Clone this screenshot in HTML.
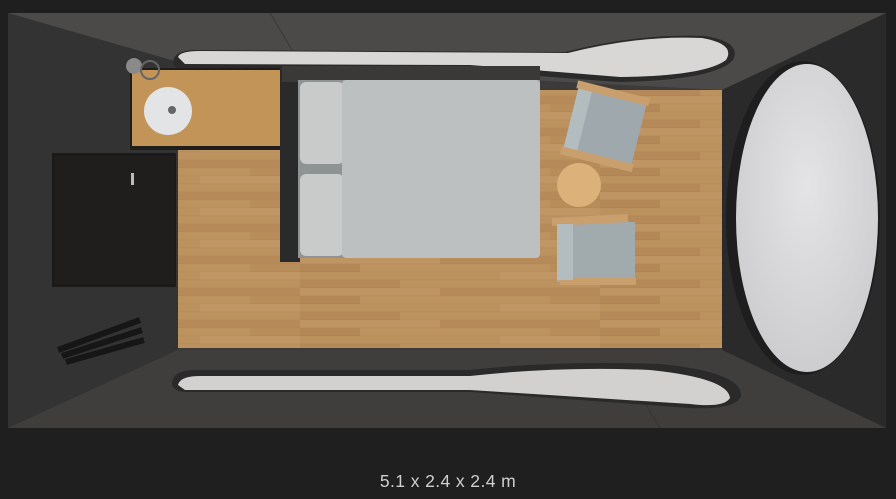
<!DOCTYPE html>
<html><head><meta charset="utf-8"><style>
html,body{margin:0;padding:0;background:#1f1f1f;width:896px;height:499px;overflow:hidden}
svg{position:absolute;left:0;top:0}
.cap{position:absolute;left:0;width:896px;top:471px;text-align:center;color:#cfcfcf;font:17.5px "Liberation Sans",sans-serif;letter-spacing:0.4px}
</style></head><body>
<svg width="896" height="499" viewBox="0 0 896 499">
<defs>
<pattern id="wood" width="300" height="32" patternUnits="userSpaceOnUse">
<rect width="300" height="32" fill="#b98e5c"/>
<rect x="0" y="0" width="140" height="8" fill="#bf9563"/>
<rect x="140" y="0" width="160" height="8" fill="#b68b59"/>
<rect x="0" y="8" width="60" height="8" fill="#b38856"/>
<rect x="60" y="8" width="190" height="8" fill="#bd9360"/>
<rect x="250" y="8" width="50" height="8" fill="#b98d5a"/>
<rect x="0" y="16" width="200" height="8" fill="#bb915e"/>
<rect x="200" y="16" width="100" height="8" fill="#c09764"/>
<rect x="0" y="24" width="100" height="8" fill="#b68a58"/>
<rect x="100" y="24" width="200" height="8" fill="#bc925f"/>
<rect y="7.5" width="300" height="0.7" fill="#8f6a42" opacity=".2"/>
<rect y="15.5" width="300" height="0.7" fill="#8f6a42" opacity=".2"/>
<rect y="23.5" width="300" height="0.7" fill="#8f6a42" opacity=".2"/>
<rect y="31.5" width="300" height="0.7" fill="#8f6a42" opacity=".2"/>
</pattern>
<radialGradient id="mir" cx="50%" cy="40%" r="60%"><stop offset="0" stop-color="#e4e4e6"/><stop offset="1" stop-color="#cdcdd0"/></radialGradient>
</defs>
<rect x="8" y="13" width="878" height="415" fill="#3c3b3a"/>
<polygon points="8,13 886,13 722,90 178,62" fill="#4b4a48"/>
<polygon points="8,13 178,62 178,350 8,428" fill="#333333"/>
<polygon points="886,13 886,428 722,350 722,90" fill="#2b2a2a"/>
<polygon points="8,428 886,428 722,350 178,350" fill="#403e3c"/>
<line x1="270" y1="13" x2="295" y2="55" stroke="#3a3938" stroke-width="1"/>
<line x1="660" y1="428" x2="640" y2="395" stroke="#363534" stroke-width="1"/>
<rect x="178" y="90" width="544" height="258" fill="url(#wood)"/>
<rect x="178" y="62" width="120" height="30" fill="url(#wood)"/>
<path d="M173,62 Q174,50 195,50 L565,52 Q640,33 705,36 Q742,42 733,60 Q715,80 620,82 Q560,78 470,70 L185,70 Q173,69 173,62 Z" fill="#2a2a2a"/>
<path d="M178,57 Q180,51 200,51 L568,53 Q640,35 702,38 Q736,44 726,60 Q705,76 620,77 Q560,72 470,65 L185,64 Z" fill="#d8d7d6"/>
<path d="M172,383 Q173,370 195,370 L470,370 Q560,360 660,364 Q742,372 741,396 Q736,410 690,408 L470,392 L185,392 Q172,391 172,383 Z" fill="#2a2a2a"/>
<path d="M178,385 Q180,376 200,376 L470,376 Q560,366 650,370 Q728,378 730,398 Q724,408 690,404 L470,390 L185,390 Z" fill="#d3d1cf"/>
<ellipse cx="803" cy="218" rx="77" ry="157" fill="#1e1e1e"/>
<ellipse cx="807" cy="218" rx="71" ry="154" fill="url(#mir)"/>
<rect x="52" y="153" width="124" height="134" fill="#1c1a19"/>
<rect x="55" y="156" width="120" height="128" fill="#201e1d"/>
<rect x="131" y="173" width="3" height="12" fill="#bbb"/>
<rect x="130" y="68" width="152" height="82" fill="#1f1e1d"/>
<rect x="132" y="70" width="148" height="76" fill="#c39458"/>
<circle cx="168" cy="111" r="24" fill="#e2e4e6"/>
<circle cx="172" cy="110" r="4" fill="#666"/>
<circle cx="134" cy="66" r="8" fill="#8a8a8a"/>
<circle cx="150" cy="70" r="9" fill="none" stroke="#666" stroke-width="2"/>
<rect x="280" y="66" width="20" height="196" fill="#2b2a2a"/>
<rect x="282" y="66" width="258" height="16" fill="#3a3938"/>
<rect x="298" y="80" width="242" height="178" fill="#8e9394"/>
<rect x="300" y="82" width="44" height="82" rx="6" fill="#c9cbcb"/>
<rect x="300" y="174" width="44" height="82" rx="6" fill="#c9cbcb"/>
<rect x="342" y="80" width="198" height="178" rx="4" fill="#bcc0c0"/>
<g transform="rotate(14 604 126)">
<rect x="570" y="94" width="70" height="64" fill="#9fa9ad"/>
<rect x="568" y="88" width="74" height="8" fill="#c99f6d"/>
<rect x="568" y="156" width="74" height="8" fill="#c99f6d"/>
<rect x="570" y="96" width="14" height="60" fill="#b3bcbf"/>
</g>
<circle cx="579" cy="185" r="22" fill="#dcb27a"/>
<rect x="557" y="222" width="78" height="60" fill="#a1abae"/>
<rect x="552" y="216" width="76" height="8" fill="#c99f6d" transform="rotate(-3 590 220)"/>
<rect x="560" y="278" width="76" height="7" fill="#c99f6d"/>
<rect x="557" y="224" width="16" height="56" fill="#b3bcbf"/>
<path d="M58,350 L140,320 M62,356 L142,330 M66,362 L144,340" stroke="#161616" stroke-width="6"/>
</svg>
<div class="cap">5.1 x 2.4 x 2.4 m</div>
</body></html>
